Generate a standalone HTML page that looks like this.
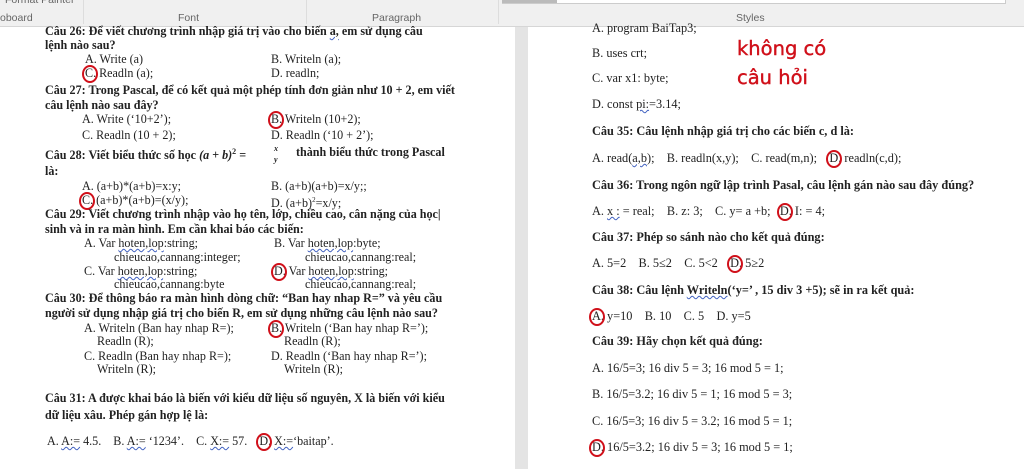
<!DOCTYPE html>
<html><head><meta charset="utf-8"><style>
body{margin:0;width:1024px;height:469px;overflow:hidden;background:#fff;position:relative;font-family:"Liberation Serif",serif;color:#222}
.t{position:absolute;font-size:12.1px;line-height:16px;white-space:nowrap}
.r .t{font-size:12.3px}
.b{font-weight:bold}
.k{position:relative}
.k::after{content:"";position:absolute;left:-3px;top:-1px;width:12px;height:14px;border:2px solid #d0101a;border-radius:50%}
.rb{position:absolute;left:0;top:0;width:1024px;height:26px;background:#f0f0f0;border-bottom:1px solid #d6d6d6}
.lab{position:absolute;top:12px;font-family:"Liberation Sans",sans-serif;font-size:10.5px;color:#666}
.u{text-decoration:underline wavy #4060c0;text-decoration-thickness:1px}
</style></head><body>
<div class="rb">
<div class="lab" style="left:0">oboard</div>
<div class="lab" style="left:178px">Font</div>
<div class="lab" style="left:372px">Paragraph</div>
<div class="lab" style="left:736px">Styles</div>
<div class="lab" style="left:5px;top:-6px">Format Painter</div>
<div style="position:absolute;left:83px;top:0;width:1px;height:24px;background:#ddd"></div>
<div style="position:absolute;left:306px;top:0;width:1px;height:24px;background:#ddd"></div>
<div style="position:absolute;left:498px;top:0;width:1px;height:24px;background:#ddd"></div>
<div style="position:absolute;left:502px;top:0;width:502px;height:3px;background:#fff;border:1px solid #ccc;border-top:0"></div>
<div style="position:absolute;left:502px;top:0;width:55px;height:3px;background:#bbb"></div>
</div>
<div style="position:absolute;left:515px;top:27px;width:13px;height:442px;background:#e4e4e4"></div>

<div class="t b" style="left:45px;top:23px">Câu 26: Để viết chương trình nhập giá trị vào cho biến <span class="u">a,</span> em sử dụng câu</div>
<div class="t b" style="left:45px;top:37px">lệnh nào sau?</div>
<div class="t" style="left:85px;top:51px">A. Write (a)</div><div class="t" style="left:271px;top:51px">B. Writeln (a);</div>
<div class="t" style="left:85px;top:65px"><span class="k">C.</span> Readln (a);</div><div class="t" style="left:271px;top:65px">D. readln;</div>
<div class="t b" style="left:45px;top:82px">Câu 27: Trong Pascal, để có kết quả một phép tính đơn giản như 10 + 2, em viết</div>
<div class="t b" style="left:45px;top:97px">câu lệnh nào sau đây?</div>
<div class="t" style="left:82px;top:111px">A. Write (‘10+2’);</div><div class="t" style="left:271px;top:111px"><span class="k">B.</span> Writeln (10+2);</div>
<div class="t" style="left:82px;top:127px">C. Readln (10 + 2);</div><div class="t" style="left:271px;top:127px">D. Readln (‘10 + 2’);</div>
<div class="t b" style="left:45px;top:144px">Câu 28: Viết biểu thức số học <i>(a + b)</i><sup style="font-size:8px">2</sup> =</div>
<div class="t b" style="left:296px;top:144px">thành biểu thức trong Pascal</div>
<div class="t" style="left:274px;top:143px;font-size:8px;line-height:11px;font-style:italic;font-weight:bold">x<br>y</div>
<div class="t b" style="left:45px;top:163px">là:</div>
<div class="t" style="left:82px;top:178px">A. (a+b)*(a+b)=x:y;</div><div class="t" style="left:271px;top:178px">B. (a+b)(a+b)=x/y;;</div>
<div class="t" style="left:82px;top:192px"><span class="k">C.</span> (a+b)*(a+b)=(x/y);</div><div class="t" style="left:271px;top:192px">D. (a+b)<sup style="font-size:7px">2</sup>=x/y;</div>
<div class="t b" style="left:45px;top:206px">Câu 29: Viết chương trình nhập vào họ tên, lớp, chiều cao, cân nặng của học|</div>
<div class="t b" style="left:45px;top:221px">sinh và in ra màn hình. Em cần khai báo các biến:</div>
<div class="t" style="left:84px;top:235px">A. Var <span class="u">hoten,lop</span>:string;</div><div class="t" style="left:274px;top:235px">B. Var <span class="u">hoten,lop</span>:byte;</div>
<div class="t" style="left:114px;top:249px">chieucao,cannang:integer;</div><div class="t" style="left:305px;top:249px">chieucao,cannang:real;</div>
<div class="t" style="left:84px;top:263px">C. Var <span class="u">hoten,lop</span>:string;</div><div class="t" style="left:274px;top:263px"><span class="k">D.</span> Var <span class="u">hoten,lop</span>:string;</div>
<div class="t" style="left:114px;top:276px">chieucao,cannang:byte</div><div class="t" style="left:305px;top:276px">chieucao,cannang:real;</div>
<div class="t b" style="left:45px;top:290px">Câu 30: Để thông báo ra màn hình dòng chữ: “Ban hay nhap R=” và yêu cầu</div>
<div class="t b" style="left:45px;top:305px">người sử dụng nhập giá trị cho biến R, em sử dụng những câu lệnh nào sau?</div>
<div class="t" style="left:84px;top:320px">A. Writeln (Ban hay nhap R=);</div><div class="t" style="left:271px;top:320px"><span class="k">B.</span> Writeln (‘Ban hay nhap R=’);</div>
<div class="t" style="left:97px;top:333px">Readln (R);</div><div class="t" style="left:284px;top:333px">Readln (R);</div>
<div class="t" style="left:84px;top:348px">C. Readln (Ban hay nhap R=);</div><div class="t" style="left:271px;top:348px">D. Readln (‘Ban hay nhap R=’);</div>
<div class="t" style="left:97px;top:361px">Writeln (R);</div><div class="t" style="left:284px;top:361px">Writeln (R);</div>
<div class="t b" style="left:45px;top:390px">Câu 31: A được khai báo là biến với kiểu dữ liệu số nguyên, X là biến với kiểu</div>
<div class="t b" style="left:45px;top:407px">dữ liệu xâu. Phép gán hợp lệ là:</div>
<div class="t" style="left:47px;top:433px">A. <span class="u">A:=</span> 4.5. &nbsp;&nbsp;&nbsp;B. <span class="u">A:=</span> ‘1234’. &nbsp;&nbsp;&nbsp;C. <span class="u">X:=</span> 57. &nbsp;&nbsp;&nbsp;<span class="k">D.</span> <span class="u">X:=</span>‘baitap’.</div>

<div class="r">
<div class="t" style="left:592px;top:20px">A. program BaiTap3;</div>
<div class="t" style="left:592px;top:45px">B. uses crt;</div>
<div class="t" style="left:592px;top:70px">C. var x1: byte;</div>
<div class="t" style="left:592px;top:96px">D. const <span class="u">pi:</span>=3.14;</div>
<div class="t b" style="left:592px;top:123px">Câu 35: Câu lệnh nhập giá trị cho các biến c, d là:</div>
<div class="t" style="left:592px;top:150px">A. read(<span class="u">a,b</span>); &nbsp;&nbsp;&nbsp;B. readln(x,y); &nbsp;&nbsp;&nbsp;C. read(m,n); &nbsp;&nbsp;&nbsp;<span class="k">D.</span> readln(c,d);</div>
<div class="t b" style="left:592px;top:177px">Câu 36: Trong ngôn ngữ lập trình Pasal, câu lệnh gán nào sau đây đúng?</div>
<div class="t" style="left:592px;top:203px">A. <span class="u">x :</span> = real; &nbsp;&nbsp;&nbsp;B. z: 3; &nbsp;&nbsp;&nbsp;C. y= a +b; &nbsp;&nbsp;<span class="k">D.</span> I: = 4;</div>
<div class="t b" style="left:592px;top:229px">Câu 37: Phép so sánh nào cho kết quả đúng:</div>
<div class="t" style="left:592px;top:255px">A. 5=2 &nbsp;&nbsp;&nbsp;B. 5≤2 &nbsp;&nbsp;&nbsp;C. 5&lt;2 &nbsp;&nbsp;&nbsp;<span class="k">D.</span> 5≥2</div>
<div class="t b" style="left:592px;top:282px">Câu 38: Câu lệnh <span class="u">Writeln</span>(‘y=’ , 15 div 3 +5); sẽ in ra kết quả:</div>
<div class="t" style="left:592px;top:308px"><span class="k">A.</span> y=10 &nbsp;&nbsp;&nbsp;B. 10 &nbsp;&nbsp;&nbsp;C. 5 &nbsp;&nbsp;&nbsp;D. y=5</div>
<div class="t b" style="left:592px;top:333px">Câu 39: Hãy chọn kết quả đúng:</div>
<div class="t" style="left:592px;top:360px">A. 16/5=3; 16 div 5 = 3; 16 mod 5 = 1;</div>
<div class="t" style="left:592px;top:386px">B. 16/5=3.2; 16 div 5 = 1; 16 mod 5 = 3;</div>
<div class="t" style="left:592px;top:413px">C. 16/5=3; 16 div 5 = 3.2; 16 mod 5 = 1;</div>
<div class="t" style="left:592px;top:439px"><span class="k">D.</span> 16/5=3.2; 16 div 5 = 3; 16 mod 5 = 1;</div>
</div>

<div style="position:absolute;left:737px;top:34px;font-family:'DejaVu Sans','Liberation Sans',sans-serif;font-size:19.5px;line-height:29px;color:#d0101a;-webkit-text-stroke:0.4px #d0101a">không có<br>câu hỏi</div>
</body></html>
